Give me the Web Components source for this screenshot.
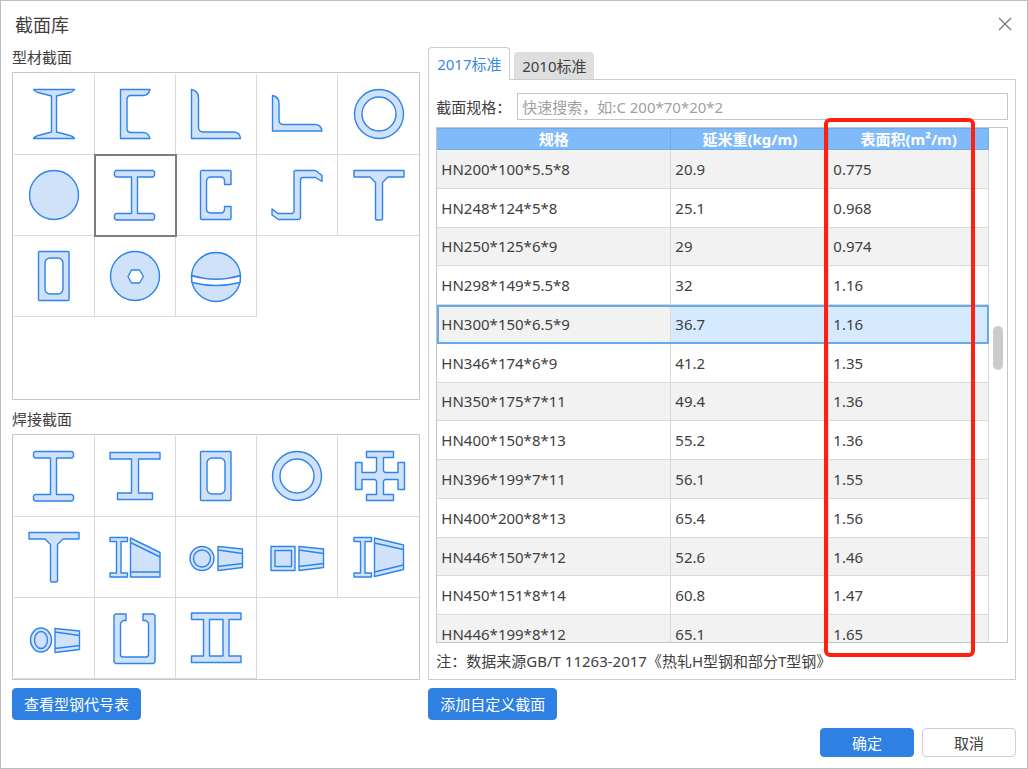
<!DOCTYPE html>
<html lang="zh-CN">
<head>
<meta charset="utf-8">
<title>截面库</title>
<style>
  body {
    margin: 0;
    background: #fff;
    color: #404040;
    font: 15px/24px "Noto Sans", "Noto Sans CJK SC", sans-serif;
    --blue: #2e80e2;
    --line: #c6c6c6;
    --grid: #d9d9d9;
  }
</style>
</head>
<body>
<library-dialog>
  <span slot="title">截面库</span>
  <section-gallery slot="left" rows="4" icons="ibeam channel angle angle-long ring disc hbeam* cee zee tee tube disc-hex ball">型材截面</section-gallery>
  <section-gallery slot="left" icons="hbeam hbeam-uneven tube ring cross tee taper-h taper-round taper-square taper-h2 taper-oval u-lip double-web">焊接截面</section-gallery>
  <push-button slot="left-action" kind="primary">查看型钢代号表</push-button>
  <standard-panel slot="right"></standard-panel>
  <push-button slot="right-action" kind="primary">添加自定义截面</push-button>
  <push-button slot="footer" kind="primary" size="wide">确定</push-button>
  <push-button slot="footer" size="wide">取消</push-button>
</library-dialog>

<script>
const H = 'M-19-24.5H18L19.5-23V-19.5L18-18H2.5V18.5H18L19.5 20V23.5L18 25H-19L-20.5 23.5V20L-19 18.5H-3.5V-18H-19L-20.5-19.5V-23Z';
const SMALL_H = '<path d="M-25-19.5H-7.5V-15.5H-14V16H-7.5V20H-25V16H-18.5V-15.5H-25Z"/>';
const CONE = '<path d="M2-10.5L26.5-8V10.5L2 13.5ZM2-7L26.5-3.5M2 9.5L26.5 6.5"/>';
const ICONS = {
  'ibeam': '<path d="M-20.5-24.5H20.5Q19-22 14-21L2.5-18V18L14 21Q19 22 20.5 24.5H-20.5Q-19 22-14 21L-2.5 18V-18L-14-21Q-19-22-20.5-24.5Z"/>',
  'channel': '<path d="M-14.5-24.5H15Q13.5-18.5 8-18.5H-4Q-8-18.5-8-14.5V14.5Q-8 18.5-4 18.5H8Q13.5 18.5 15 24.5H-14.5Z"/>',
  'angle': '<path d="M-24.5-24.5Q-17.5-23-17.5-16V13Q-17.5 18-13 18H17Q24 18 24.5 24.5H-24.5Z"/>',
  'angle-long': '<path d="M-24.5-18.5Q-18-17-18-11V5.5Q-18 10.5-14 10.5H18Q24 10.5 25 17H-24.5Z"/>',
  'ring': '<circle r="24.5"/><circle r="17" fill="#fff"/>',
  'disc': '<circle r="24.5"/>',
  'hbeam': `<path d="${H}"/>`,
  'cee': '<path d="M-14.5-24.5H14L15-23.5V-10.5H8.5V-14Q8.5-18 4.5-18H-5Q-9.5-18-9.5-13.5V13.5Q-9.5 18-5 18H4.5Q8.5 18 8.5 14V11.5H15V23.5L14 24.5H-14.5L-15.5 23.5V-23.5Z"/>',
  'zee': '<path d="M-2-24.5H18.5L25-19.5V-13.5L18.5-17.5H6Q3.5-17.5 3.5-15V23L2 24.5H-18.5L-25 20V14L-19 18.5H-4.5L-3 17V-23.5Z"/>',
  'tee': '<path d="M-25-24.5H25V-18H9L3.5-12.5V24L2.5 25H-2.5L-3.5 24V-12.5L-9-18H-25Z"/>',
  'tube': '<rect x="-15.5" y="-24.5" width="30.5" height="49" rx="1"/><rect x="-9" y="-18" width="18" height="36" rx="5" fill="#fff"/>',
  'disc-hex': '<circle r="24.5"/><path fill="#fff" d="M-7 .5L-3.5-6H4.5L8.5 .5L4.5 7H-3.5Z"/>',
  'ball': '<circle cy="1" r="24.5"/><path fill="#fff" d="M-24.5-.5Q0 7 24.5-.5L24 6.5Q0 12.5-24 6.5Z"/>',
  'hbeam-uneven': '<path d="M-25-23.5H25V-17H3.5V17H17.5V23.5H-17.5V17H-3.5V-17H-25Z"/>',
  'cross': '<path transform="translate(1)" d="M-13.5-24.5H13.5V-18.5H3.5V-5L5-3.5H18V-13.5H24.5V13.5H18V3.5H5L3.5 5V18.5H13.5V24.5H-13.5V18.5H-3.5V5L-5 3.5H-18V13.5H-24.5V-13.5H-18V-3.5H-5L-3.5-5V-18.5H-13.5Z"/>',
  'taper-h': SMALL_H + '<path d="M-4.5-19L25-4.5V20H-4.5ZM-4.5-14.5L25 0M-4.5 15H25"/>',
  'taper-round': '<circle cx="-14" cy="1.5" r="12"/><circle cx="-14" cy="1.5" r="8.5"/>' + CONE,
  'taper-square': '<rect x="-26" y="-10.5" width="24" height="24"/><rect x="-22" y="-6.5" width="16.5" height="16"/>' + CONE,
  'taper-h2': SMALL_H + '<path d="M-4.5-19L24.5-12V12.5L-4.5 19.5ZM-4.5-14L24.5-7.5M-4.5 15L24.5 8"/>',
  'taper-oval': '<ellipse cx="-13" cy="2" rx="10.5" ry="12"/><ellipse cx="-13" cy="2" rx="6.5" ry="8.5"/><g transform="translate(-1 1)">' + CONE + '</g>',
  'u-lip': '<path d="M-19.5-24H-9V-17.5H-12L-14.5-15V16.5Q-14.5 19-12 19H11Q13.5 19 13.5 16.5V-15L11-17.5H8V-24H18.5L20-22.5V24L18.5 25.5H-19.5L-21 24V-22.5Z"/>',
  'double-web': '<path fill-rule="evenodd" d="M-24.5-25H25V-18.5H13V18H25V24.5H-24.5V18H-12.5V-18.5H-24.5ZM-6.5-18.5V18H7V-18.5Z"/>'
};

class LibraryDialog extends HTMLElement {
  constructor() {
    super();
    this.attachShadow({ mode: 'open' }).innerHTML = `
      <style>
        :host { display: flex; flex-direction: column; box-sizing: border-box; min-height: 100vh;
                padding: 0 12px 11px; border: 1px solid #bdbdbd; background: #fff; }
        header { display: flex; justify-content: space-between; align-items: center; height: 45px; padding-left: 2px; }
        h1 { margin: 0; padding-top: 2px; font-size: 18px; line-height: 24px; font-weight: 400; }
        .close { display: flex; padding: 2px; margin: 0; border: 0; background: none; }
        .close svg { width: 16px; height: 16px; }
        main { display: grid; grid-template-columns: 41fr 59fr; column-gap: 8px; row-gap: 8px; margin: 0 -1px; }
        main > div { min-width: 0; display: flex; flex-direction: column; gap: 8px; }
        footer { display: flex; justify-content: flex-end; gap: 8px; margin: 8px -1px 0 0; }
      </style>
      <header>
        <h1><slot name="title"></slot></h1>
        <button class="close" aria-label="关闭"><svg viewBox="0 0 16 16"><path d="M2 2L14 14M14 2L2 14" stroke="#777" stroke-width="1.3"/></svg></button>
      </header>
      <main>
        <div><slot name="left"></slot></div>
        <div><slot name="right"></slot></div>
        <div><slot name="left-action"></slot></div>
        <div><slot name="right-action"></slot></div>
      </main>
      <footer><slot name="footer"></slot></footer>`;
  }
}

class PushButton extends HTMLElement {
  constructor() {
    super();
    this.attachShadow({ mode: 'open' }).innerHTML = `
      <style>
        :host { display: block; }
        button { display: block; box-sizing: border-box; height: 32px; margin: 0; padding: 0 11px; border: 1px solid #cfcfcf;
                 border-radius: 4px; background: #fff; color: inherit; font: inherit; line-height: 24px; }
        :host([kind=primary]) button { background: var(--blue); border-color: var(--blue); color: #fff; }
        :host([size=wide]) button { width: 94px; height: 29px; }
      </style>
      <button type="button"><slot></slot></button>`;
  }
}

class SectionTile extends HTMLElement {
  connectedCallback() {
    this.attachShadow({ mode: 'open' }).innerHTML = `
      <style>
        :host { display: block; box-sizing: border-box; min-width: 0; border: solid var(--grid); border-width: 0 1px 1px 0; }
        :host([selected]) { outline: 2px solid #7d7d7d; outline-offset: -1px; position: relative; }
        button { display: flex; align-items: center; justify-content: center; width: 100%; height: 100%; padding: 0; border: 0; background: none; }
        svg { width: 56px; height: 56px; fill: #d0e2fa; stroke: #2e84ec; stroke-width: 1.4; stroke-linejoin: round; }
      </style>
      <button type="button" aria-label="${this.getAttribute('icon')}"><svg viewBox="-28 -28 56 56">${ICONS[this.getAttribute('icon')]}</svg></button>`;
  }
}

class SectionGallery extends HTMLElement {
  connectedCallback() {
    const tiles = this.getAttribute('icons').split(' ').map(n =>
      `<section-tile icon="${n.replace('*', '')}"${n.endsWith('*') ? ' selected' : ''}></section-tile>`).join('');
    this.attachShadow({ mode: 'open' }).innerHTML = `
      <style>
        :host { display: block; }
        h2 { margin: 0 0 4px; font: inherit; line-height: 22px; }
        .grid { display: grid; grid-template-columns: repeat(5, 1fr); grid-auto-rows: 81px; align-content: start;
                border: 1px solid var(--line); padding: 1px 0 0 1px; }
        section-tile:nth-child(5n) { border-right-width: 0; }
        :host([rows="4"]) .grid { grid-template-rows: repeat(4, 81px); padding-bottom: 1px; }
      </style>
      <h2><slot></slot></h2><div class="grid">${tiles}</div>`;
  }
}

class SpecTable extends HTMLElement {
  connectedCallback() {
    const rows = [
      ['HN200*100*5.5*8', '20.9', '0.775'], ['HN248*124*5*8', '25.1', '0.968'], ['HN250*125*6*9', '29', '0.974'],
      ['HN298*149*5.5*8', '32', '1.16'], ['HN300*150*6.5*9', '36.7', '1.16'], ['HN346*174*6*9', '41.2', '1.35'],
      ['HN350*175*7*11', '49.4', '1.36'], ['HN400*150*8*13', '55.2', '1.36'], ['HN396*199*7*11', '56.1', '1.55'],
      ['HN400*200*8*13', '65.4', '1.56'], ['HN446*150*7*12', '52.6', '1.46'], ['HN450*151*8*14', '60.8', '1.47'],
      ['HN446*199*8*12', '65.1', '1.65']];
    this.attachShadow({ mode: 'open' }).innerHTML = `
      <style>
        :host { display: block; position: relative; border: 1px solid var(--line); }
        .view { height: 514px; overflow: hidden; padding-right: 18px; }
        table { width: 100%; height: 526px; table-layout: fixed; border-collapse: separate; border-spacing: 0; }
        th { box-sizing: border-box; height: 22px; padding: 0; background: #80bafb; color: #fff; line-height: 20px;
             border: solid #70abea; border-width: 1px 1px 1px 0; }
        th:nth-child(1) { width: 234px; }
        th:nth-child(2) { width: 158px; }
        td { padding: 0 4px; border: solid var(--grid); border-width: 0 1px 1px 0; }
        tbody tr:nth-child(odd) { background: #f2f2f2; }
        tr.selected { outline: 2px solid #68a9ea; outline-offset: -2px; }
        tr.selected td + td { background: #d6eaff; }
        .thumb { position: absolute; right: 4px; top: 198px; width: 10px; height: 44px; border-radius: 5px; background: #cbcbcb; }
        .mark { position: absolute; right: 32px; top: -10px; bottom: -15px; width: 151px; box-sizing: border-box;
                border: 4px solid #ff2012; border-radius: 6px; pointer-events: none; }
      </style>
      <div class="view"><table>
        <thead><tr><th>规格</th><th>延米重(kg/m)</th><th>表面积(m²/m)</th></tr></thead>
        <tbody>${rows.map((r, i) => `<tr${i === 4 ? ' class="selected"' : ''}>${r.map(c => `<td>${c}</td>`).join('')}</tr>`).join('')}</tbody>
      </table></div>
      <div class="thumb"></div><div class="mark"></div>`;
  }
}

class StandardPanel extends HTMLElement {
  constructor() {
    super();
    this.attachShadow({ mode: 'open' }).innerHTML = `
      <style>
        :host { display: flex; flex-direction: column; padding-top: 1px; flex: 1; }
        .tabs { display: flex; align-items: flex-end; gap: 4px; height: 32px; }
        .tabs button { box-sizing: border-box; min-width: 80px; margin: 0; padding: 0 7px; height: 27px; border: 0;
                       border-radius: 4px 4px 0 0; background: #dedede; color: inherit; font: inherit; }
        .tabs .active { position: relative; min-width: 82px; height: 33px; margin-bottom: -1px; border: 1px solid #c9ccd2;
                        border-bottom: 0; background: #fff; color: #3a88e6; }
        .panel { flex: 1; border: 1px solid #c9ccd2; padding: 13px 7px 6px; }
        .search { display: flex; align-items: center; margin-bottom: 7px; }
        label { flex: none; width: 81px; }
        input { flex: 1; min-width: 0; box-sizing: border-box; height: 27px; margin: 0; padding: 0 4px; border: 1px solid var(--line);
                border-radius: 0; background: #fff; color: inherit; font: inherit; }
        input::placeholder { color: #a0a0a0; opacity: 1; }
        p { margin: 6px 0 0; }
      </style>
      <div class="tabs" role="tablist">
        <button role="tab" class="active" aria-selected="true">2017标准</button>
        <button role="tab" aria-selected="false">2010标准</button>
      </div>
      <div class="panel">
        <div class="search"><label for="spec">截面规格：</label><input id="spec" type="text" placeholder="快速搜索，如:C 200*70*20*2"></div>
        <spec-table></spec-table>
        <p>注：数据来源GB/T 11263-2017《热轧H型钢和部分T型钢》</p>
      </div>`;
  }
}

customElements.define('push-button', PushButton);
customElements.define('section-tile', SectionTile);
customElements.define('section-gallery', SectionGallery);
customElements.define('spec-table', SpecTable);
customElements.define('standard-panel', StandardPanel);
customElements.define('library-dialog', LibraryDialog);
</script>
</body>
</html>
